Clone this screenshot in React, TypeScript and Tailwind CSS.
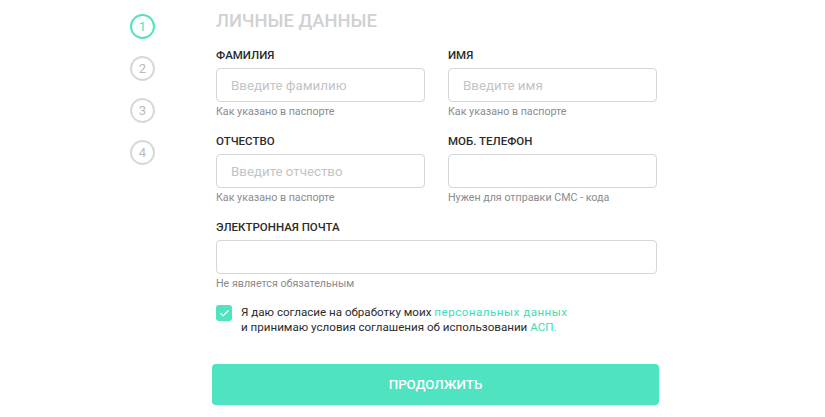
import { Check } from 'lucide-react'

const steps = [1, 2, 3, 4]

function Field({
  label,
  placeholder,
  hint,
  className = '',
}: {
  label: string
  placeholder?: string
  hint: string
  className?: string
}) {
  return (
    <div className={className}>
      <div className="text-[11.5px] leading-[16px] font-medium text-[#2b2b2b]">{label}</div>
      <input
        className="mt-[5px] w-full h-[34px] rounded-[4px] border border-[#d4d6d8] px-[14px] text-[13.3px] text-[#333] placeholder:text-[#c2c4c6] outline-none"
        placeholder={placeholder}
      />
      <div className="mt-[3px] text-[10.7px] leading-[14px] text-[#8a8c8e]">{hint}</div>
    </div>
  )
}

export default function App() {
  return (
    <div
      className="w-[825px] h-[417px] bg-white flex pl-[130px]"
      style={{ fontFamily: 'Roboto, "Noto Sans", sans-serif' }}
    >
      <div className="flex flex-col gap-[17px] pt-[14px] w-[25px]">
        {steps.map(n => (
          <div
            key={n}
            className={
              n === 1
                ? 'w-[25px] h-[25px] rounded-full border-2 border-[#4fe3c1] text-[#4fe3c1] flex items-center justify-center text-[13px]'
                : 'w-[25px] h-[25px] rounded-full border-2 border-[#d6d8da] text-[#b8babc] flex items-center justify-center text-[13px]'
            }
          >
            {n}
          </div>
        ))}
      </div>

      <div className="ml-[61px] w-[441px] pt-[9px]">
        <h2 className="text-[18.4px] leading-[24px] font-medium text-[#cfd1d3]">ЛИЧНЫЕ ДАННЫЕ</h2>

        <div className="mt-[14px] grid grid-cols-2 gap-x-[23px] gap-y-[14px]">
          <Field label="ФАМИЛИЯ" placeholder="Введите фамилию" hint="Как указано в паспорте" />
          <Field label="ИМЯ" placeholder="Введите имя" hint="Как указано в паспорте" />
          <Field label="ОТЧЕСТВО" placeholder="Введите отчество" hint="Как указано в паспорте" />
          <Field label="МОБ. ТЕЛЕФОН" hint="Нужен для отправки СМС - кода" />
          <Field
            className="col-span-2"
            label="ЭЛЕКТРОННАЯ ПОЧТА"
            hint="Не является обязательным"
          />
        </div>

        <div className="mt-[14px] flex gap-[9px]">
          <div className="w-[16px] h-[16px] rounded-[3px] bg-[#4fe3c1] flex items-center justify-center shrink-0">
            <Check className="w-[11px] h-[11px] text-white" strokeWidth={2.5} />
          </div>
          <p className="text-[11.6px] leading-[15px] text-[#2b2b2b]">
            Я даю согласие на обработку моих{' '}
            <span className="text-[#3fdcb8] tracking-[0.5px]">персональных данных</span>
            <br />
            и принимаю условия соглашения об использовании{' '}
            <span className="text-[#3fdcb8]">АСП.</span>
          </p>
        </div>

        <button className="mt-[29px] -ml-[4px] w-[447px] h-[41px] rounded-[4px] bg-[#4fe3c1] text-white text-[13.3px] font-medium">
          ПРОДОЛЖИТЬ
        </button>
      </div>
    </div>
  )
}
